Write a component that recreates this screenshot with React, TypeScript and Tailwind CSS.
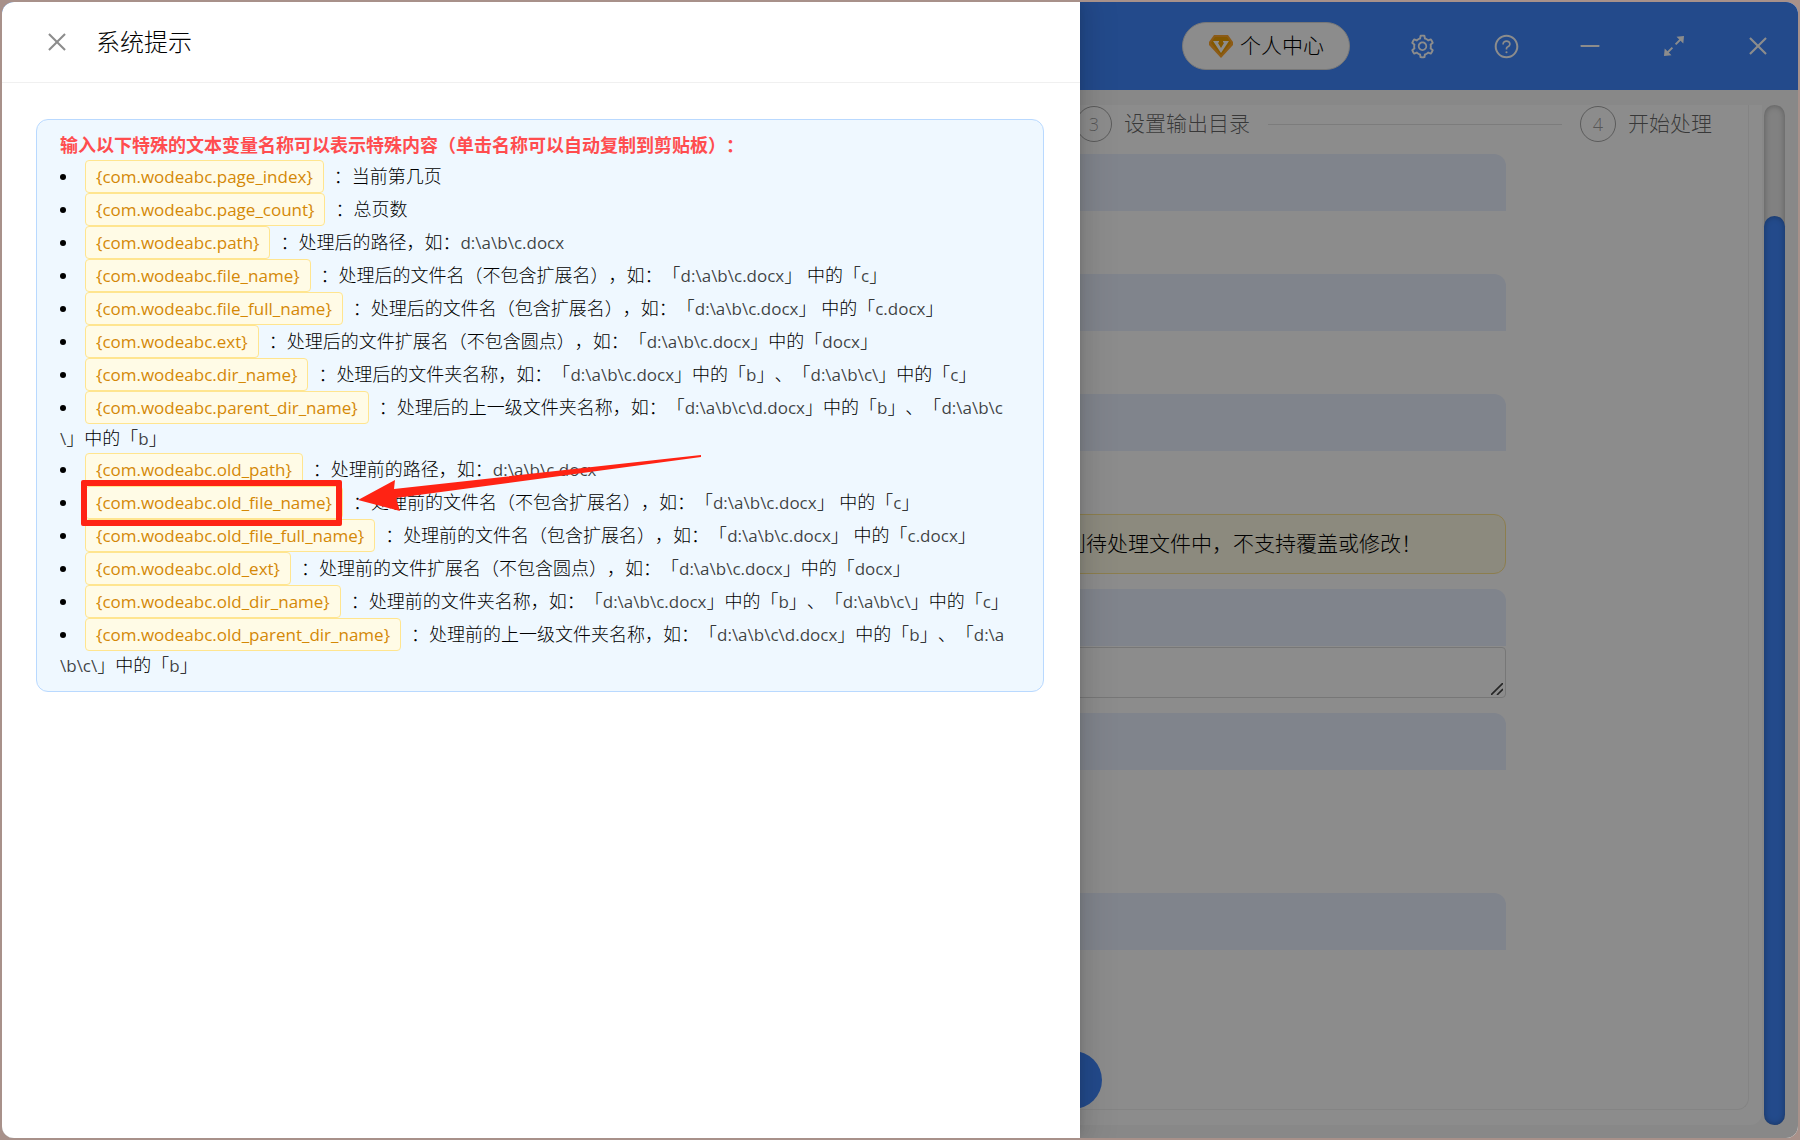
import type { ReactNode } from 'react';
import { AiOutlineClose, AiOutlineMinus, AiOutlineQuestionCircle, AiOutlineSetting } from 'react-icons/ai';

const variables = [
  { name: 'page_index', desc: '当前第几页' },
  { name: 'page_count', desc: '总页数' },
  { name: 'path', desc: '处理后的路径，如：d:\\a\\b\\c.docx' },
  { name: 'file_name', desc: '处理后的文件名（不包含扩展名），如：「d:\\a\\b\\c.docx」 中的「c」' },
  { name: 'file_full_name', desc: '处理后的文件名（包含扩展名），如：「d:\\a\\b\\c.docx」 中的「c.docx」' },
  { name: 'ext', desc: '处理后的文件扩展名（不包含圆点），如：「d:\\a\\b\\c.docx」中的「docx」' },
  { name: 'dir_name', desc: '处理后的文件夹名称，如：「d:\\a\\b\\c.docx」中的「b」、「d:\\a\\b\\c\\」中的「c」' },
  { name: 'parent_dir_name', desc: '处理后的上一级文件夹名称，如：「d:\\a\\b\\c\\d.docx」中的「b」、「d:\\a\\b\\c\\」中的「b」' },
  { name: 'old_path', desc: '处理前的路径，如：d:\\a\\b\\c.docx' },
  { name: 'old_file_name', desc: '处理前的文件名（不包含扩展名），如：「d:\\a\\b\\c.docx」 中的「c」', marked: true },
  { name: 'old_file_full_name', desc: '处理前的文件名（包含扩展名），如：「d:\\a\\b\\c.docx」 中的「c.docx」' },
  { name: 'old_ext', desc: '处理前的文件扩展名（不包含圆点），如：「d:\\a\\b\\c.docx」中的「docx」' },
  { name: 'old_dir_name', desc: '处理前的文件夹名称，如：「d:\\a\\b\\c.docx」中的「b」、「d:\\a\\b\\c\\」中的「c」' },
  { name: 'old_parent_dir_name', desc: '处理前的上一级文件夹名称，如：「d:\\a\\b\\c\\d.docx」中的「b」、「d:\\a\\b\\c\\」中的「b」' },
];

function WindowButton({ label, last, children }: { label: string; last?: boolean; children: ReactNode }) {
  return (
    <button type="button" aria-label={label} className={`flex h-12 items-center justify-center text-white ${last ? 'ml-0.5 w-20' : 'w-[84px]'}`}>
      {children}
    </button>
  );
}

function TitleBar() {
  return (
    <header className="flex h-[88px] shrink-0 items-center justify-end bg-[#4088fd]">
      <button type="button" className="mr-[30px] flex h-12 items-center gap-1.5 rounded-full border border-[#d9d9d9] bg-white px-[25px] text-[21px] text-black">
        <svg viewBox="0 0 26 24" className="h-6 w-[26px]" aria-hidden="true">
          <path d="M6 1h14l5 7v3L13 24 1 11V8z" fill="#ffa62b" />
          <path d="M7 3h12l4 6-10 12L3 9z" fill="#f0a000" />
          <path d="M5 7h6v1l-1 1 3 5 3-5-1-1V7h6l-8 12z" fill="#fff" />
        </svg>
        个人中心
      </button>
      <WindowButton label="设置"><AiOutlineSetting className="size-[27px]" /></WindowButton>
      <WindowButton label="帮助"><AiOutlineQuestionCircle className="size-[27px]" /></WindowButton>
      <WindowButton label="最小化"><AiOutlineMinus className="size-[26px]" /></WindowButton>
      <WindowButton label="最大化">
        <svg viewBox="0 0 20 20" className="size-5" aria-hidden="true">
          <path d="M12.5.7 20 0l-.7 7.5zM7.5 19.3 0 20l.7-7.5z" fill="currentColor" />
          <path d="m11.6 8.4 6-6M8.4 11.6l-6 6" stroke="currentColor" strokeWidth="2" />
        </svg>
      </WindowButton>
      <WindowButton label="关闭" last><AiOutlineClose className="size-[26px]" /></WindowButton>
    </header>
  );
}

function Step({ index, title }: { index: number; title: string }) {
  return (
    <div className="flex items-center gap-3 text-[21px] text-black/60">
      <span className="flex size-9 items-center justify-center rounded-full border border-black/35 text-lg text-black/40">{index}</span>
      {title}
    </div>
  );
}

function Block() {
  return <div className="h-[57px] rounded-t-xl bg-[#e9f0ff]" />;
}

function Workspace() {
  return (
    <main className="flex min-h-0 flex-1 bg-[#f7f7f7] pt-[15px] pr-[13px] pb-[13px]">
      <div className="mr-0.5 flex flex-1 flex-col rounded-br-xl bg-white pr-[13px] pb-[15px]">
        <div className="flex flex-1 flex-col rounded-br-xl border-r border-b border-[#f0f0f0] pt-px">
          <div className="flex items-center justify-end gap-[18px] pr-9">
            <Step index={3} title="设置输出目录" />
            <div className="h-px w-[294px] bg-[#e2e2e2]" />
            <Step index={4} title="开始处理" />
          </div>
          <div className="mt-3 mr-[242px] ml-9 flex flex-col">
            <div className="flex flex-col gap-[63px]">
              <Block />
              <Block />
              <Block />
              <p className="flex h-[60px] items-center justify-end rounded-xl border border-[#ffe58f] bg-[#fffbe6] pr-[83px] text-[21px] text-black">
                到待处理文件中，不支持覆盖或修改！
              </p>
            </div>
            <div className="mt-[15px]">
              <Block />
              <div className="relative mt-px">
                <textarea aria-label="文本内容" className="block h-[51px] w-full resize-none rounded border border-[#d9d9d9] bg-white" />
                <svg viewBox="0 0 12 12" className="absolute right-[3px] bottom-[3px] size-3" aria-hidden="true">
                  <path d="M0 12 12 0M6 12l6-6" stroke="#444" strokeWidth="1.6" />
                </svg>
              </div>
            </div>
            <div className="mt-[15px] flex flex-col gap-[123px]">
              <Block />
              <Block />
            </div>
          </div>
          <button type="button" aria-label="下一步" className="mt-auto mr-[646px] h-[58px] w-[240px] self-end rounded-full bg-[#4088fd]" />
        </div>
      </div>
      <div className="flex w-[21px] flex-col rounded-full bg-[#ebebeb] pt-[111px] shadow-[inset_0_0_6px_rgba(0,0,0,0.3)]">
        <div className="flex-1 rounded-full bg-[#4088fd] shadow-[inset_0_0_6px_rgba(0,0,0,0.3)]" />
      </div>
    </main>
  );
}

function Marker() {
  return (
    <>
      <span className="absolute -top-[7px] right-0 -bottom-2 -left-[5px] z-10 rounded-xs border-[6px] border-[#ff2314]" />
      <svg viewBox="0 0 344 56" className="absolute -top-8 left-[272px] z-10 h-14 w-[344px] max-w-none" aria-hidden="true">
        <path d="M0 45 37 25l-1 9L343 0v2L38 43l4 13z" fill="#ff2314" />
      </svg>
    </>
  );
}

// Latin runs are set one size down so they sit evenly beside the Chinese text
function Description({ text }: { text: string }) {
  return text.split(/([\x21-\x7e]+)/).map((part, i) =>
    i % 2 ? <span key={i} className="text-[17px] font-normal text-black/75">{part}</span> : part
  );
}

function SystemTips() {
  return (
    <aside className="absolute inset-y-0 left-0 w-3/5 bg-white shadow-[6px_0_16px_rgba(0,0,0,0.08),3px_0_6px_-4px_rgba(0,0,0,0.12),9px_0_28px_8px_rgba(0,0,0,0.05)]">
      <div className="flex h-[81px] items-center gap-[26px] border-b border-[#f0f0f0] pl-[42px]">
        <button type="button" aria-label="关闭提示" className="text-black/45">
          <AiOutlineClose className="size-[26px]" />
        </button>
        <h2 className="text-2xl font-light">系统提示</h2>
      </div>
      <div className="mt-9 mr-9 ml-[34px] rounded-xl border border-[#b9d9ff] bg-[#eff8ff] py-[11px] pr-[30px] pl-[23px] text-lg/[29px]">
        <p className="font-bold text-[#ff4d4f]">输入以下特殊的文本变量名称可以表示特殊内容（单击名称可以自动复制到剪贴板）：</p>
        <ul className="list-inside list-disc break-all">
          {variables.map((v) => (
            <li key={v.name}>
              <button
                type="button"
                className="relative mr-2.5 inline-block h-[33px] rounded border border-[#ffe58f] bg-[#fffbe6] px-2.5 text-[17px] leading-[31px] font-normal text-[#d48806]"
              >
                {`{com.wodeabc.${v.name}}`}
                {v.marked && <Marker />}
              </button>
              ：<Description text={v.desc} />
            </li>
          ))}
        </ul>
      </div>
    </aside>
  );
}

export default function App() {
  return (
    <div className="h-screen bg-[#a8918a] p-0.5 font-['Open_Sans','Noto_Sans_CJK_SC',sans-serif] font-light text-black [text-spacing-trim:space-all]">
      <div className="relative flex h-full flex-col overflow-hidden rounded-xl bg-[#f7f7f7]">
        <TitleBar />
        <Workspace />
        <div className="absolute inset-0 bg-black/45" />
        <SystemTips />
      </div>
    </div>
  );
}
